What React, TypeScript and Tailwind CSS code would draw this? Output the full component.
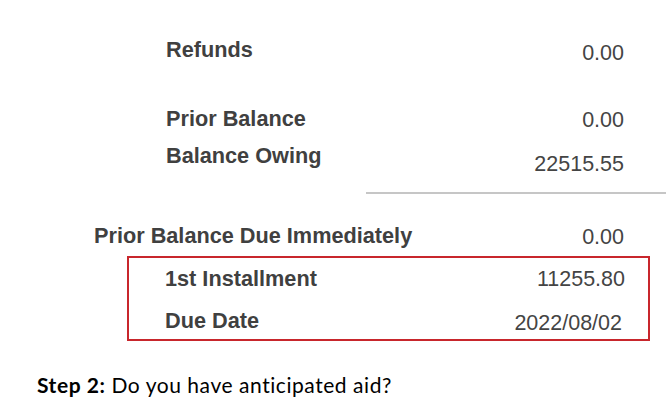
import React from 'react';

type Row = { label: string; value: string; valueOffset: number };

const labelCls =
  "font-bold text-[21.7px] leading-[25px] text-[#404040] font-['Liberation_Sans',Arial,sans-serif]";
const valueCls =
  "text-[21.5px] leading-[25px] text-[#444444] font-['Liberation_Sans',Arial,sans-serif]";

const AmountRow: React.FC<Row & { className?: string; padLeft: string; padRight?: string }> = ({
  label,
  value,
  valueOffset,
  className = '',
  padLeft,
  padRight = 'pr-[42px]',
}) => (
  <div className={`flex items-start justify-between ${className}`}>
    <span className={`${labelCls} ${padLeft}`}>{label}</span>
    <span className={`${valueCls} ${padRight}`} style={{ marginTop: valueOffset }}>
      {value}
    </span>
  </div>
);

const App: React.FC = () => {
  return (
    <div className="w-[666px] h-[416px] bg-white overflow-hidden">
      <div className="pt-[37px]">
        <AmountRow label="Refunds" value="0.00" valueOffset={4} padLeft="pl-[166px]" />
        <AmountRow
          label="Prior Balance"
          value="0.00"
          valueOffset={2}
          padLeft="pl-[166px]"
          className="mt-[40px]"
        />
        <AmountRow
          label="Balance Owing"
          value="22515.55"
          valueOffset={9}
          padLeft="pl-[166px]"
          className="mt-[10px]"
        />
        <div className="mt-[15px] ml-[366px] h-[2px] bg-[#c6c6c6]" />
        <AmountRow
          label="Prior Balance Due Immediately"
          value="0.00"
          valueOffset={2}
          padLeft="pl-[94px]"
          className="mt-[29px]"
        />

        {/* highlighted installment box */}
        <div className="ml-[127px] w-[523px] h-[85px] mt-[6px] border-2 border-[#c8262c] pt-[8px]">
          <AmountRow
            label="1st Installment"
            value="11255.80"
            valueOffset={1}
            padLeft="pl-[36px]"
            padRight="pr-[23px]"
          />
          <AmountRow
            label="Due Date"
            value="2022/08/02"
            valueOffset={3}
            padLeft="pl-[36px]"
            padRight="pr-[26px]"
            className="mt-[16px]"
          />
        </div>

        <p className="mt-[32px] pl-[37px] text-[21px] leading-[24px] tracking-[0.55px] text-black font-['Lato','Open_Sans',sans-serif]">
          <span className="font-bold">Step 2:</span> Do you have anticipated aid?
        </p>
      </div>
    </div>
  );
};

export default App;
